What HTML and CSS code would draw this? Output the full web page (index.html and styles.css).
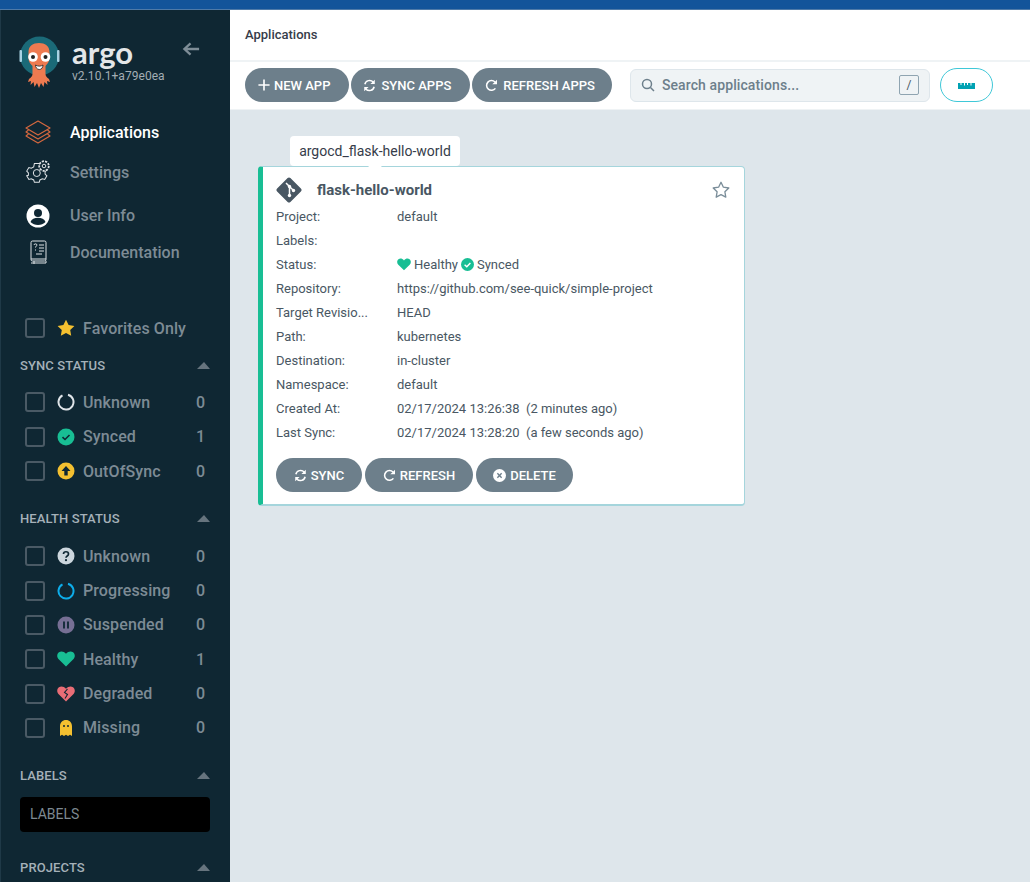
FILE: index.html
```html
<!DOCTYPE html>
<html lang="en">

<head>
    <meta charset="UTF-8">
    <title>Applications - Argo CD</title>
    <link rel="stylesheet" href="styles.css">
</head>

<body>
    <div class="top-strip"></div>
    <div class="layout">
        <!-- Left navigation and filters -->
        <aside class="sidebar">
            <div class="brand">
                <svg class="mascot" viewBox="0 0 42 54" width="42" height="54">
                    <circle cx="20.500" cy="20" r="19.500" fill="#1b6a78" />
                    <rect x="0.500" y="14" width="2.500" height="12" rx="1" fill="#a9d3e4" />
                    <rect x="38" y="14" width="2.500" height="12" rx="1" fill="#a9d3e4" />
                    <path d="M9.500 16C9.500 10 14 7 20 7s10.500 3 10.500 9v6c0 4-2.500 6-4 8v8c0 2 1 3 3.500 5l1 3-3-1 .5 4-3-3-1 5-2.500-4-2 5-2-5-2.500 4-1-5-3 3 .5-4-3 1 1-3c2.500-2 3.500-3 3.500-5v-8c-2-2-4-4-4-8z" fill="#ee7a50" />
                    <circle cx="14" cy="21" r="4.800" fill="#fff" />
                    <circle cx="26.500" cy="21" r="4.800" fill="#fff" />
                    <circle cx="14" cy="21" r="2" fill="#222" />
                    <circle cx="26.500" cy="21" r="2" fill="#222" />
                    <path d="M16.500 29c2 1.500 5.500 1.500 7.500 0 0 2.500-1.500 4.500-3.700 4.500S16.500 31.500 16.500 29z" fill="#fff" stroke="#222" stroke-width="0.800" />
                </svg>
                <div class="brand-text">
                    <div class="brand-name">argo</div>
                    <div class="brand-version">v2.10.1+a79e0ea</div>
                </div>
                <svg class="collapse" viewBox="0 0 20 16" width="19" height="16">
                    <path d="M18 8H3M9 2 2.500 8 9 14" fill="none" stroke="#7e8d97" stroke-width="2.400" />
                </svg>
            </div>

            <nav class="nav">
                <a class="nav-item nav-item-active">
                    <svg viewBox="0 0 26 24" width="26" height="24" fill="none" stroke="#d4683f" stroke-width="1.200" stroke-linejoin="round">
                        <path d="M13 1 25 8 13 15 1 8z" />
                        <path d="M3.500 10 1 12l12 7 12-7-2.500-2" />
                        <path d="M3.500 14 1 16l12 7 12-7-2.500-2" />
                    </svg>
                    <span>Applications</span>
                </a>
                <a class="nav-item nav-item-settings">
                    <svg viewBox="0 0 24 24" width="24" height="24" fill="none" stroke="#dfe3e6" stroke-width="1">
                        <path d="M7 7h4l.6 2 2 1 2-.6 1.800 3-1.500 1.500v2l1.500 1.500-1.800 3-2-.6-2 1-.6 2H7l-.6-2-2-1-2 .6-1.800-3L2 16.900v-2L.6 13.400l1.800-3 2 .6 2-1z" transform="translate(0 -5) scale(1.200)" stroke-width="0.850" />
                        <circle cx="10.800" cy="13" r="3.500" />
                        <circle cx="18" cy="6" r="4.800" fill="#0f2733" stroke-dasharray="2.200 1.100" stroke-width="1.800" />
                        <circle cx="18" cy="6" r="1.800" />
                    </svg>
                    <span>Settings</span>
                </a>
                <a class="nav-item nav-item-user">
                    <svg viewBox="0 0 24 24" width="24" height="24">
                        <circle cx="12" cy="12" r="11.500" fill="#fff" />
                        <circle cx="12" cy="9" r="4" fill="#0f2733" />
                        <path d="M4.500 18c1-3 4-4.200 7.500-4.200s6.500 1.200 7.500 4.200c-2 2-4.500 3-7.500 3s-5.500-1-7.500-3z" fill="#0f2733" />
                    </svg>
                    <span>User Info</span>
                </a>
                <a class="nav-item nav-item-docs">
                    <svg viewBox="0 0 24 24" width="24" height="24" fill="none" stroke="#dfe3e6" stroke-width="1">
                        <rect x="5" y="1" width="15" height="20" rx="1.500" />
                        <path d="M5 19h15M5 23h15v-2M8 21v3" />
                        <path d="M13 5h5M13 8h5M13 11h5M10 14h6" />
                        <path d="M8 5c0-1.500 3-1.500 3 0 0 1.200-1.500 1-1.500 2.500M9.500 9.500v1" />
                    </svg>
                    <span>Documentation</span>
                </a>
            </nav>

            <div class="filter-row filter-favorites">
                <span class="checkbox"></span>
                <svg class="status-icon" viewBox="0 0 18 18" width="18" height="18">
                    <path d="M9 .8l2.600 5.300 5.800.8-4.200 4.100 1 5.800L9 14.100 3.800 16.800l1-5.800L.6 6.900l5.800-.8z" fill="#f4c030" />
                </svg>
                <span class="filter-name">Favorites Only</span>
            </div>

            <div class="filter-head filter-head-sync"><span>SYNC STATUS</span><i class="caret"></i></div>
            <div class="filter-list">
                <div class="filter-row">
                    <span class="checkbox"></span>
                    <svg class="status-icon" viewBox="0 0 18 18" width="18" height="18">
                        <path d="M11 1.800A7.500 7.500 0 1 1 5.500 2.400" fill="none" stroke="#dfe4e8" stroke-width="2" />
                    </svg>
                    <span class="filter-name">Unknown</span><span class="filter-count">0</span>
                </div>
                <div class="filter-row">
                    <span class="checkbox"></span>
                    <svg class="status-icon" viewBox="0 0 18 18" width="18" height="18">
                        <circle cx="9" cy="9" r="8.500" fill="#18be94" />
                        <path d="M5.500 9.200 8 11.500l4.500-4.500" fill="none" stroke="#0f2733" stroke-width="1.600" />
                    </svg>
                    <span class="filter-name">Synced</span><span class="filter-count">1</span>
                </div>
                <div class="filter-row">
                    <span class="checkbox"></span>
                    <svg class="status-icon" viewBox="0 0 18 18" width="18" height="18">
                        <circle cx="9" cy="9" r="8.500" fill="#f4c030" />
                        <path d="M9 4 4.500 9h2.800v4.500h3.400V9h2.800z" fill="#0f2733" />
                    </svg>
                    <span class="filter-name">OutOfSync</span><span class="filter-count">0</span>
                </div>
            </div>

            <div class="filter-head filter-head-health"><span>HEALTH STATUS</span><i class="caret"></i></div>
            <div class="filter-list">
                <div class="filter-row">
                    <span class="checkbox"></span>
                    <svg class="status-icon" viewBox="0 0 18 18" width="18" height="18">
                        <circle cx="9" cy="9" r="8.500" fill="#ccd6dd" />
                        <path d="M6.500 7c0-3 5-3 5 0 0 2-2.500 2-2.500 3.800" fill="none" stroke="#0f2733" stroke-width="1.700" />
                        <circle cx="9" cy="13.200" r="1.100" fill="#0f2733" />
                    </svg>
                    <span class="filter-name">Unknown</span><span class="filter-count">0</span>
                </div>
                <div class="filter-row">
                    <span class="checkbox"></span>
                    <svg class="status-icon" viewBox="0 0 18 18" width="18" height="18">
                        <path d="M11 1.800A7.500 7.500 0 1 1 5.500 2.400" fill="none" stroke="#0dadea" stroke-width="2" />
                    </svg>
                    <span class="filter-name">Progressing</span><span class="filter-count">0</span>
                </div>
                <div class="filter-row">
                    <span class="checkbox"></span>
                    <svg class="status-icon" viewBox="0 0 18 18" width="18" height="18">
                        <circle cx="9" cy="9" r="8.500" fill="#766f94" />
                        <path d="M7 5.500v7M11 5.500v7" stroke="#0f2733" stroke-width="1.800" />
                    </svg>
                    <span class="filter-name">Suspended</span><span class="filter-count">0</span>
                </div>
                <div class="filter-row">
                    <span class="checkbox"></span>
                    <svg class="status-icon" viewBox="0 0 18 16" width="18" height="16">
                        <path d="M9 15.500 1.700 8.200C-.5 6-.1 2.800 1.900 1.300 3.900-.2 6.800.2 9 2.700c2.200-2.500 5.100-2.900 7.100-1.400 2 1.500 2.400 4.700.2 6.900z" fill="#18be94" />
                    </svg>
                    <span class="filter-name">Healthy</span><span class="filter-count">1</span>
                </div>
                <div class="filter-row">
                    <span class="checkbox"></span>
                    <svg class="status-icon" viewBox="0 0 18 16" width="18" height="16">
                        <path d="M9 15.500 1.700 8.200C-.5 6-.1 2.800 1.900 1.300 3.900-.2 6.800.2 9 2.700c2.200-2.500 5.100-2.900 7.100-1.400 2 1.500 2.400 4.700.2 6.900z" fill="#e96d76" />
                        <path d="M10.500 3 7.500 6.500l3 2-2.500 4" fill="none" stroke="#0f2733" stroke-width="1.100" />
                    </svg>
                    <span class="filter-name">Degraded</span><span class="filter-count">0</span>
                </div>
                <div class="filter-row">
                    <span class="checkbox"></span>
                    <svg class="status-icon" viewBox="0 0 18 18" width="18" height="18">
                        <path d="M3 17V7.500C3 3.500 5.500 1 9 1s6 2.500 6 6.500V17l-2-1.300-2 1.300-2-1.300L7 17l-2-1.300z" fill="#f4c030" />
                        <circle cx="7" cy="7" r="1" fill="#0f2733" />
                        <circle cx="11" cy="7" r="1" fill="#0f2733" />
                    </svg>
                    <span class="filter-name">Missing</span><span class="filter-count">0</span>
                </div>
            </div>

            <div class="filter-head filter-head-labels"><span>LABELS</span><i class="caret"></i></div>
            <div class="labels-input">LABELS</div>
            <div class="filter-head filter-head-projects"><span>PROJECTS</span><i class="caret"></i></div>
        </aside>

        <main class="main">
            <header class="page-title">Applications</header>

            <!-- Actions and search -->
            <div class="toolbar">
                <button class="btn btn-new">
                    <svg viewBox="0 0 14 14" width="12" height="12"><path d="M7 .5v13M.5 7h13" stroke="#fff" stroke-width="1.900" /></svg>
                    NEW APP
                </button>
                <button class="btn btn-sync-apps">
                    <svg viewBox="0 0 16 16" width="13" height="13"><use href="#icon-sync" /></svg>
                    SYNC APPS
                </button>
                <button class="btn btn-refresh-apps">
                    <svg viewBox="0 0 16 16" width="13" height="13"><use href="#icon-redo" /></svg>
                    REFRESH APPS
                </button>
                <div class="search">
                    <svg viewBox="0 0 14 14" width="14" height="14" fill="none" stroke="#6d7f8b" stroke-width="1.500">
                        <circle cx="6" cy="6" r="4.500" />
                        <path d="m9.500 9.500 3.500 3.500" />
                    </svg>
                    <span class="search-text">Search applications...</span>
                    <kbd class="search-key">/</kbd>
                </div>
                <button class="ruler-btn">
                    <svg viewBox="0 0 17 7" width="17" height="7">
                        <path d="M0 1h2.500v2h1V1h2.500v2.500h1V1H9v2h1V1h2.500v2.500h1V1H17v6H0z" fill="#00a2b3" />
                    </svg>
                </button>
            </div>

            <section class="content">
                <div class="card">
                    <div class="tooltip">argocd_flask-hello-world</div>
                    <div class="card-head">
                        <svg viewBox="0 0 26 26" width="26" height="26">
                            <path d="M13 .5a2 2 0 0 1 1.400.6l10.500 10.500a2 2 0 0 1 0 2.800L14.400 24.900a2 2 0 0 1-2.800 0L1.100 14.400a2 2 0 0 1 0-2.800L11.600 1.100A2 2 0 0 1 13 .5z" fill="#495763" />
                            <path d="M10 6l3.500 3.500M13.500 9.500V18M13.500 9.500l4 4" stroke="#fff" stroke-width="1.500" />
                            <circle cx="13.500" cy="9.500" r="1.700" fill="#fff" />
                            <circle cx="13.500" cy="18.500" r="1.700" fill="#fff" />
                            <circle cx="17.500" cy="13.500" r="1.700" fill="#fff" />
                        </svg>
                        <span class="card-name">flask-hello-world</span>
                        <svg class="star" viewBox="0 0 18 18" width="18" height="18">
                            <path d="M9 1.300l2.400 4.900 5.400.8-3.900 3.800.9 5.400L9 13.700l-4.800 2.500.9-5.400L1.200 7l5.400-.8z" fill="none" stroke="#7a8d99" stroke-width="1.300" stroke-linejoin="round" />
                        </svg>
                    </div>
                    <dl class="fields">
                        <dt>Project:</dt><dd>default</dd>
                        <dt>Labels:</dt><dd></dd>
                        <dt>Status:</dt>
                        <dd class="status-line">
                            <svg viewBox="0 0 18 16" width="14" height="13">
                                <path d="M9 15.500 1.700 8.200C-.5 6-.1 2.800 1.900 1.300 3.900-.2 6.800.2 9 2.700c2.200-2.500 5.100-2.900 7.100-1.400 2 1.500 2.400 4.700.2 6.900z" fill="#18be94" />
                            </svg>
                            <span>Healthy</span>
                            <svg viewBox="0 0 18 18" width="13" height="13">
                                <circle cx="9" cy="9" r="9" fill="#18be94" />
                                <path d="M5 9.300 8 12l5-5.200" fill="none" stroke="#fff" stroke-width="2" />
                            </svg>
                            <span>Synced</span>
                        </dd>
                        <dt>Repository:</dt><dd>https://github.com/see-quick/simple-project</dd>
                        <dt>Target Revisio...</dt><dd>HEAD</dd>
                        <dt>Path:</dt><dd>kubernetes</dd>
                        <dt>Destination:</dt><dd>in-cluster</dd>
                        <dt>Namespace:</dt><dd>default</dd>
                        <dt>Created At:</dt><dd>02/17/2024 13:26:38&nbsp; (2 minutes ago)</dd>
                        <dt>Last Sync:</dt><dd>02/17/2024 13:28:20&nbsp; (a few seconds ago)</dd>
                    </dl>
                    <div class="card-actions">
                        <button class="btn btn-small btn-sync">
                            <svg viewBox="0 0 16 16" width="13" height="13"><use href="#icon-sync" /></svg>
                            SYNC
                        </button>
                        <button class="btn btn-small btn-refresh">
                            <svg viewBox="0 0 16 16" width="13" height="13"><use href="#icon-redo" /></svg>
                            REFRESH
                        </button>
                        <button class="btn btn-small btn-delete">
                            <svg viewBox="0 0 14 14" width="13" height="13">
                                <circle cx="7" cy="7" r="7" fill="#fff" />
                                <path d="m4.700 4.700 4.600 4.600m0-4.600-4.600 4.600" stroke="#6d7f8b" stroke-width="1.500" />
                            </svg>
                            DELETE
                        </button>
                    </div>
                </div>
            </section>
        </main>
    </div>

    <!-- Shared icons -->
    <svg class="defs" width="0" height="0">
        <symbol id="icon-sync" viewBox="0 0 16 16">
            <path d="M2.300 6.500A5.900 5.900 0 0 1 12.500 3.800M13.700 9.500A5.900 5.900 0 0 1 3.500 12.200" fill="none" stroke="#fff" stroke-width="1.900" />
            <path d="M14.500.8v5.400H9.100zM1.500 15.200V9.800h5.400z" fill="#fff" />
        </symbol>
        <symbol id="icon-redo" viewBox="0 0 16 16">
            <path d="M12.800 11.500A6 6 0 1 1 12.300 3.800" fill="none" stroke="#fff" stroke-width="1.900" />
            <path d="M14.800.8v5.800H9z" fill="#fff" />
        </symbol>
    </svg>
</body>

</html>
```

FILE: styles.css
```css
/* Basic page styling */
* {
    box-sizing: border-box;
}

html,
body {
    height: 882px;
    margin: 0;
    overflow: hidden;
}

body {
    background-color: #dee6eb;
    color: #495763;
    font-family: 'Roboto', 'Liberation Sans', sans-serif;
    font-size: 13px;
}

.top-strip {
    height: 10px;
    background-color: #13549a;
    border-bottom: 1px solid #4f7aa8;
}

.layout {
    display: flex;
    height: 872px;
}

.defs {
    position: absolute;
}

/* Sidebar */
.sidebar {
    width: 230px;
    flex-shrink: 0;
    padding: 24px 20px 0 19px;
    background-color: #0f2733;
    border-left: 1px solid #1f3947;
    color: #7d8b95;
    overflow: hidden;
}

.brand {
    display: flex;
    height: 54px;
    margin-left: -1px;
}

.mascot {
    flex-shrink: 0;
    margin-top: 2px;
}

.brand-text {
    margin-left: 11px;
    width: 98px;
}

.brand-name {
    color: #e3e6e8;
    font-family: 'Lato', sans-serif;
    font-size: 31px;
    font-weight: 700;
    line-height: 34px;
    margin-top: 1px;
}

.brand-version {
    color: #a3adb4;
    font-size: 12px;
    line-height: 15px;
    letter-spacing: 0.050px;
    white-space: nowrap;
}

.collapse {
    margin-top: 7px;
    margin-left: 12px;
    flex-shrink: 0;
}

.nav {
    margin-top: 24px;
}

.nav-item {
    display: flex;
    align-items: center;
    height: 40px;
    font-size: 16px;
    font-weight: 500;
}

.nav-item svg {
    width: 26px;
    flex-shrink: 0;
    margin: 0 19px 0 5px;
}

.nav-item-active {
    color: #ffffff;
}

.nav-item-user {
    height: 44px;
    padding-top: 3px;
}

.nav-item-docs {
    height: 32px;
}

/* Filters */
.filter-row {
    display: flex;
    align-items: center;
    height: 34.300px;
    padding-left: 5px;
    font-size: 16px;
    font-weight: 500;
    letter-spacing: 0.100px;
}

.filter-favorites {
    margin-top: 43px;
}

.checkbox {
    width: 20px;
    height: 20px;
    flex-shrink: 0;
    margin-right: 12px;
    border: 2px solid #4a5a65;
    border-radius: 3px;
}

.status-icon {
    flex-shrink: 0;
    margin-right: 8px;
}

.filter-name {
    flex-grow: 1;
}

.filter-count {
    width: 14px;
}

.filter-head {
    display: flex;
    align-items: center;
    justify-content: space-between;
    height: 20px;
    margin-top: 10px;
    margin-bottom: 10px;
    color: #a5b1b9;
    font-size: 13px;
    font-weight: 500;
    letter-spacing: 0.100px;
}

.filter-head-sync {
    margin-top: 10px;
    margin-bottom: 10px;
}

.filter-head-health {
    margin-top: 20.500px;
    margin-bottom: 10.500px;
}

.filter-head-labels {
    margin-top: 21px;
    margin-bottom: 11px;
}

.filter-head-projects {
    margin-top: 26px;
}

.caret {
    width: 0;
    height: 0;
    border-left: 7px solid transparent;
    border-right: 6px solid transparent;
    border-bottom: 7px solid #66747e;
}

.labels-input {
    display: flex;
    align-items: center;
    height: 35px;
    padding-left: 10px;
    background-color: #000000;
    border-radius: 4px;
    color: #7d8991;
    font-size: 14px;
}

/* Main column */
.main {
    flex-grow: 1;
    min-width: 0;
}

.page-title {
    display: flex;
    align-items: center;
    height: 50px;
    padding: 0 0 1px 15px;
    background-color: #ffffff;
    color: #363c4a;
    font-weight: 500;
    font-size: 13px;
}

.toolbar {
    display: flex;
    align-items: center;
    height: 50px;
    padding: 0 0 1px 15px;
    background-color: #ffffff;
    border-top: 2px solid #eff3f5;
    border-bottom: 1px solid #eff3f5;
    gap: 2px;
}

.btn {
    display: flex;
    align-items: center;
    justify-content: center;
    gap: 5px;
    height: 34px;
    padding: 0 18px 0 13px;
    background-color: #6d7f8b;
    border: none;
    border-radius: 17px;
    color: #ffffff;
    font-family: inherit;
    font-size: 13px;
    font-weight: 500;
    white-space: nowrap;
}

.btn-new {
    gap: 4px;
    padding: 0 19px 0 13px;
}

.btn-sync-apps {
    padding: 0 19px 0 12px;
}

.btn-refresh-apps {
    padding-right: 17px;
}

.search {
    display: flex;
    align-items: center;
    width: 300px;
    height: 33px;
    margin-left: 16px;
    padding: 0 10px;
    background-color: #eff3f5;
    border: 1px solid #dee6eb;
    border-radius: 6px;
    color: #6d7f8b;
}

.search-text {
    flex-grow: 1;
    margin-left: 7px;
    font-size: 14px;
    font-weight: 500;
    letter-spacing: 0.100px;
}

.search-key {
    display: flex;
    align-items: center;
    justify-content: center;
    width: 20px;
    height: 20px;
    border: 1px solid #8fa4b1;
    border-radius: 2px;
    color: #495763;
    font-family: inherit;
    font-size: 12px;
}

.ruler-btn {
    display: flex;
    align-items: center;
    justify-content: center;
    width: 53px;
    height: 34px;
    margin-left: 8px;
    padding: 0;
    background-color: #ffffff;
    border: 1px solid #3fc8d8;
    border-radius: 17px;
}

/* Application card */
.content {
    padding: 56px 0 0 28px;
}

.card {
    position: relative;
    width: 487px;
    height: 340px;
    padding: 10px 0 0 13px;
    background-color: #ffffff;
    border: 1px solid #a5d5dc;
    border-left: 5px solid #18be94;
    border-bottom-width: 2px;
    border-radius: 4px;
}

.tooltip {
    position: absolute;
    top: -31px;
    left: 27px;
    width: 170px;
    height: 30px;
    background-color: #ffffff;
    border-radius: 4px;
    color: #363c4a;
    font-size: 14px;
    line-height: 30px;
    text-align: center;
}

.tooltip::after {
    content: "";
    position: absolute;
    left: 78px;
    top: 30px;
    border-left: 7px solid transparent;
    border-right: 7px solid transparent;
    border-top: 6px solid #ffffff;
}

.card-head {
    display: flex;
    align-items: center;
    height: 26px;
}

.card-name {
    flex-grow: 1;
    margin-left: 15px;
    color: #495763;
    font-size: 15px;
    font-weight: 700;
}

.star {
    margin-right: 14px;
}

.fields {
    display: grid;
    grid-template-columns: 121px 1fr;
    grid-auto-rows: 24px;
    align-items: center;
    margin: 1px 0 0;
}

.fields dt,
.fields dd {
    margin: 0;
    white-space: nowrap;
}

.status-line {
    display: flex;
    align-items: center;
    gap: 3px;
}

.card-actions {
    display: flex;
    gap: 3px;
    margin-top: 14px;
}

.btn-small {
    padding: 0;
    gap: 4px;
}

.btn-sync {
    width: 86px;
}

.btn-refresh {
    width: 108px;
}

.btn-delete {
    width: 97px;
}
```
